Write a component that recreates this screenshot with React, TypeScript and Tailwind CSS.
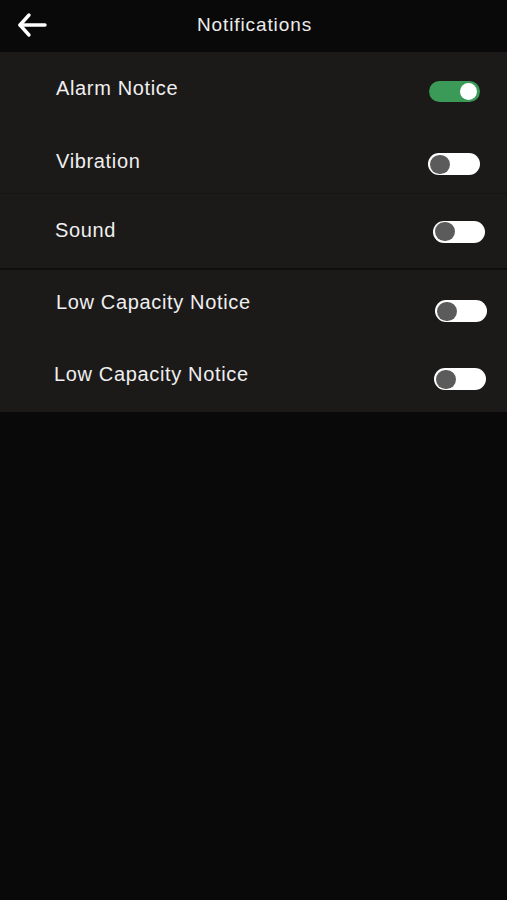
const rows = [
  { section: 0, label: "Alarm Notice", on: true, h: "h-[75px]", pl: "pl-[56px]", pr: "pr-[27px]", tmt: "mt-[-3px]", smt: "mt-[4px]" },
  { section: 0, label: "Vibration", on: false, h: "h-[66px]", pl: "pl-[56px]", pr: "pr-[27px]", tmt: "mt-[2px]", smt: "mt-[8px]" },
  { section: 1, label: "Sound", on: false, h: "h-[74px]", pl: "pl-[55px]", pr: "pr-[22px]", tmt: "mt-[-2px]", smt: "mt-[1px]" },
  { section: 2, label: "Low Capacity Notice", on: false, h: "h-[69px]", pl: "pl-[56px]", pr: "pr-[20px]", tmt: "mt-[-5px]", smt: "mt-[13px]" },
  { section: 2, label: "Low Capacity Notice", on: false, h: "h-[73px]", pl: "pl-[54px]", pr: "pr-[21px]", tmt: "mt-[-3px]", smt: "mt-[7px]" },
];

const Toggle = ({ on, className }: { on: boolean; className?: string }) => {
  if (on) {
    return (
      <div className={`flex h-[21px] w-[51px] items-center justify-end rounded-full bg-[#3b9a58] pr-[3px] ${className}`}>
        <div className="h-[17px] w-[17px] rounded-full bg-white" />
      </div>
    );
  }
  return (
    <div className={`flex h-[22px] w-[52px] items-center rounded-full bg-white pl-[2px] ${className}`}>
      <div className="h-[19px] w-[20px] rounded-full bg-[#5c5b5b]" />
    </div>
  );
};

const Row = ({ row }: { row: (typeof rows)[number] }) => (
  <div className={`flex items-center justify-between ${row.h} ${row.pl} ${row.pr}`}>
    <span className={`text-[20px] tracking-[0.65px] text-[#efefef] ${row.tmt}`}>{row.label}</span>
    <Toggle on={row.on} className={row.smt} />
  </div>
);

export default function App() {
  return (
    <div className="flex min-h-[900px] w-full flex-col bg-[#0a0909] font-['Liberation_Sans',Arial,sans-serif]">
      <div className="relative flex h-[52px] items-center justify-center">
        <svg
          className="absolute left-[16px] top-[10px]"
          width="32"
          height="30"
          viewBox="0 0 32 30"
          fill="none"
          stroke="white"
          strokeWidth="3.4"
          strokeLinecap="round"
          strokeLinejoin="round"
        >
          <path d="M4 15 H29" />
          <path d="M13 5 L4 15 L13 25" />
        </svg>
        <span className="ml-[2px] mt-[-2px] text-[19px] tracking-[0.9px] text-[#ececec]">Notifications</span>
      </div>

      <div className="flex flex-col bg-[#1c1919]">
        <div className="flex flex-col border-b border-[#151313]">
          <Row row={rows[0]} />
          <Row row={rows[1]} />
        </div>
        <div className="flex flex-col border-b-2 border-[#100e0e]">
          <Row row={rows[2]} />
        </div>
        <div className="flex flex-col">
          <Row row={rows[3]} />
          <Row row={rows[4]} />
        </div>
      </div>
    </div>
  );
}
